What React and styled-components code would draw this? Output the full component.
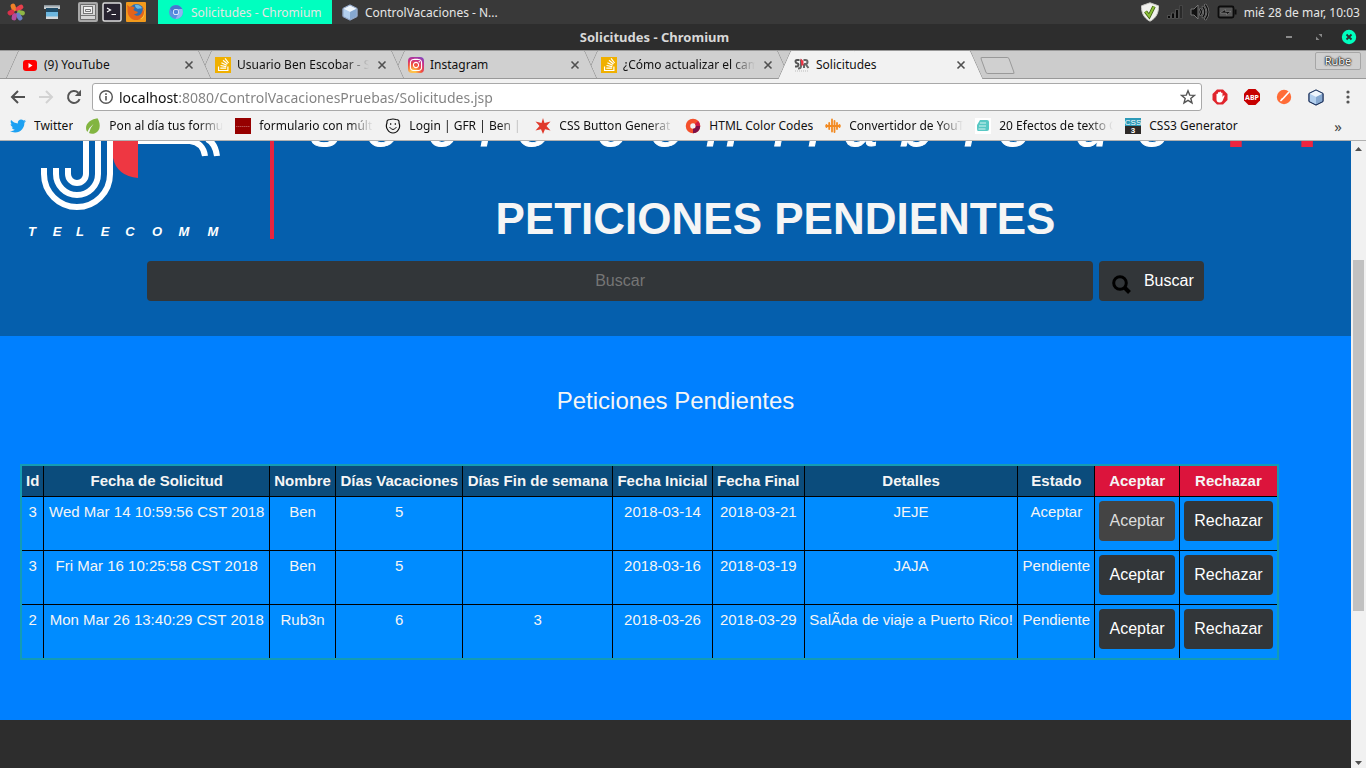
import { useState } from 'react';
import styled, { createGlobalStyle } from 'styled-components';
import { FaTwitter, FaInstagram, FaStackOverflow } from 'react-icons/fa';

const GlobalStyle = createGlobalStyle`
  * {
    box-sizing: border-box;
  }
  body {
    margin: 0;
    font-family: 'Noto Sans', 'Open Sans', sans-serif;
    font-size: 12px;
  }
  button, input {
    font-family: inherit;
    margin: 0;
  }
  svg {
    display: block;
    flex: none;
  }
`;

const Screen = styled.div`
  display: flex;
  flex-direction: column;
  height: 100vh;
  overflow: hidden;
`;

const PlainButton = styled.button`
  display: flex;
  align-items: center;
  justify-content: center;
  padding: 0;
  border: 0;
  background: none;
  color: inherit;
`;

/* desktop panel */

const Panel = styled.header`
  display: flex;
  align-items: center;
  height: 24px;
  background-color: #393939;
  color: #e6e6e6;
`;

const Launchers = styled.div`
  display: flex;
  align-items: center;
  gap: 4px;
  padding: 0 12px 0 6px;
`;

const Launcher = styled(PlainButton)`
  width: 20px;
  height: 20px;
  margin-right: ${(props) => (props.$wide ? '12px' : '0')};
`;

const Task = styled(PlainButton)`
  justify-content: flex-start;
  gap: 7px;
  width: 174px;
  height: 24px;
  padding-left: 10px;
  font-size: 12px;
  background-color: ${(props) => (props.$active ? '#00ffbf' : 'transparent')};
`;

const Tray = styled.div`
  display: flex;
  align-items: center;
  gap: 7px;
  margin-left: auto;
  padding-right: 6px;
`;

/* browser window */

const TitleBar = styled.div`
  display: flex;
  align-items: center;
  height: 26px;
  padding: 0 9px 0 28px;
  background-color: #2d2d2d;
  color: #d8d8d8;
`;

const WindowTitle = styled.div`
  flex: 1;
  font-size: 13px;
  font-weight: bold;
  text-align: center;
`;

const WindowButtons = styled.div`
  display: flex;
  gap: 14px;
`;

const WindowButton = styled(PlainButton)`
  width: 16px;
  height: 16px;
`;

const TabStrip = styled.nav`
  display: flex;
  height: 29px;
  padding: 0 5px 0 12px;
  background-color: #cccccc;
  box-shadow: inset 0 -1px #999999, inset 0 1px #999999;
`;

const Tab = styled.div`
  position: relative;
  z-index: ${(props) => (props.$active ? 10 : 5 - props.$order)};
  display: flex;
  align-items: center;
  gap: 6px;
  flex: 0 1 193px;
  min-width: 0;
  padding: 0 11px 0 10px;

  /* both halves lean outwards to form the trapezoid */
  &::before,
  &::after {
    content: '';
    position: absolute;
    z-index: -1;
    top: 0;
    bottom: ${(props) => (props.$active ? '0' : '1px')};
    width: 60%;
    background-color: ${(props) => (props.$active ? '#f2f2f2' : '#d0d0d0')};
    border-top: 1px solid #999999;
  }
  &::before {
    left: 0;
    border-left: 1px solid #999999;
    border-radius: 2px 0 0 0;
    transform: skewX(-24deg);
  }
  &::after {
    right: 0;
    border-right: 1px solid #999999;
    border-radius: 0 2px 0 0;
    transform: skewX(24deg);
  }
`;

const FadingText = styled.span`
  overflow: hidden;
  white-space: nowrap;
  color: #111111;
  mask-image: ${(props) => (props.$cut ? 'linear-gradient(to left, transparent, black 24px)' : 'none')};
`;

const TabTitle = styled(FadingText)`
  flex: 1;
  margin-right: 2px;
`;

const NewTab = styled.button`
  width: 29px;
  height: 17px;
  margin: 7px 0 0 6px;
  border: 1px solid #999999;
  border-radius: 2px;
  background-color: #d0d0d0;
  transform: skewX(20deg);
`;

const Profile = styled.button`
  width: 46px;
  height: 18px;
  margin: 2px 0 0 auto;
  padding: 0;
  border: 1px solid #a6a6a6;
  border-radius: 2px;
  background-color: #d0d0d0;
  color: white;
  font-size: 11px;
  line-height: 16px;
  text-shadow: 0 0 2px black, 0 0 2px black, 0 0 1px black;
`;

const Toolbar = styled.div`
  display: flex;
  align-items: center;
  height: 36px;
  padding: 0 8px 0 4px;
  background-color: #f2f2f2;
`;

const ToolButton = styled(PlainButton)`
  width: 28px;
  height: 28px;
`;

const ToolBox = styled.div`
  display: flex;
  gap: 12px;
  margin-left: 8px;
`;

const Extension = styled(PlainButton)`
  width: 20px;
  height: 20px;
`;

const AddressBar = styled.label`
  display: flex;
  align-items: center;
  flex: 1;
  height: 28px;
  margin-left: 4px;
  padding: 0 5px;
  gap: 5px;
  border: 1px solid #a9a9a9;
  border-radius: 3px;
  background-color: white;
`;

/* host part is dark, the rest of the address is grey */
const Address = styled.input`
  flex: 1;
  min-width: 0;
  padding: 0;
  border: 0;
  outline: 0;
  font-size: 14px;
  color: #808080;
  background-image: linear-gradient(to right, #111111 60px, #808080 60px);
  background-clip: text;
  -webkit-text-fill-color: transparent;
`;

const Bookmarks = styled.div`
  display: flex;
  align-items: center;
  gap: 12px;
  height: 26px;
  padding: 0 24px 4px 10px;
  background-color: #f2f2f2;
  border-bottom: 1px solid #b0b0b0;
`;

const Bookmark = styled.a`
  display: flex;
  align-items: center;
  gap: 8px;
  text-decoration: none;
`;

const BookmarkTitle = styled(FadingText)`
  width: ${(props) => (props.$cut ? '114px' : 'auto')};
`;

const More = styled(PlainButton)`
  margin-left: auto;
  font-size: 15px;
  line-height: 18px;
  color: #444444;
`;

/* scrolled web page */

const Viewport = styled.div`
  display: flex;
  flex: 1;
  min-height: 0;
`;

const Page = styled.div`
  display: flex;
  flex-direction: column;
  flex: 1;
  min-width: 0;
  overflow: hidden;
  font-family: 'Liberation Sans', Arial, sans-serif;
  color: #f5f5f5;
  background-color: #2d2d2d;
`;

const Banner = styled.div`
  padding-bottom: 35px;
  background-color: #055fad;
`;

const Brand = styled.div`
  display: flex;
  height: 120px;
`;

const Slogan = styled.div`
  flex: 1;
  min-width: 0;
`;

const Title = styled.h1`
  margin: 44px 0 0;
  padding-right: 76px;
  font-size: 44px;
  line-height: 52px;
  text-align: center;
  white-space: nowrap;
`;

const SearchForm = styled.form`
  display: flex;
  justify-content: center;
  gap: 6px;
`;

const SearchInput = styled.input`
  width: 70%;
  height: 40px;
  border: 0;
  border-radius: 4px;
  background-color: #323639;
  color: #f5f5f5;
  font-size: 16px;
  text-align: center;
  &::placeholder {
    color: #757575;
  }
`;

const Button = styled.button`
  height: 40px;
  padding: 0 10px;
  border: 0;
  border-radius: 4px;
  background-color: #323639;
  color: white;
  font-size: 16px;
  &:disabled {
    background-color: #444444;
    color: #dddddd;
  }
`;

const SearchButton = styled(Button)`
  display: flex;
  align-items: center;
  gap: 11px;
`;

const Main = styled.main`
  padding: 51px 0 60px;
  background-color: #0080ff;
`;

const Heading = styled.h2`
  margin: 0 0 49px;
  font-size: 24px;
  font-weight: normal;
  line-height: 28px;
  text-align: center;
`;

const Table = styled.table`
  width: calc(100% - 92px);
  margin-left: 20px;
  border: 2px solid #149cb4;
  border-collapse: collapse;
  font-size: 15px;
  line-height: 22px;
  text-align: center;
  white-space: nowrap;
`;

const HeadCell = styled.th`
  padding: 4px;
  border: 1px solid black;
  background-color: ${(props) => (props.$action ? '#dc143c' : '#0b4c7c')};
`;

const Cell = styled.td`
  padding: ${(props) => (props.$action ? '4px 4px 9px' : '4px')};
  border: 1px solid black;
  background-color: #008cff;
  vertical-align: top;
`;

const RowButton = styled(Button)`
  display: block;
  width: 100%;
`;

const Scrollbar = styled.div`
  display: flex;
  flex-direction: column;
  align-items: center;
  width: 15px;
  padding: 6px 0 3px;
  background-color: #f1f1f1;
`;

const Track = styled.div`
  display: grid;
  grid-template-rows: 109fr 351fr 150fr;
  flex: 1;
  width: 11px;
`;

const Thumb = styled.div`
  grid-row: 2;
  background-color: #c1c1c1;
`;

const Flower = () => (
  <svg width="18" height="18" viewBox="0 0 18 18">
    <g strokeWidth="4.800" strokeLinecap="round">
      <path d="M7 6L6 3" stroke="#f08228" />
      <path d="M11 6l3-2" stroke="#e8404c" />
      <path d="M12.500 9.500l3 .5" stroke="#8fb644" />
      <path d="M11 12l2 3" stroke="#6b7fc6" />
      <path d="M7.500 12.500L7 15" stroke="#b64a9c" />
      <path d="M5 9l-2 1" stroke="#d8304a" />
    </g>
  </svg>
);

const DesktopIcon = () => (
  <svg width="18" height="16" viewBox="0 0 18 16">
    <path d="M1 1h16v4H1z" fill="#c6ccd0" />
    <path d="M1 1h16v1.500H1z" fill="#8c959b" />
    <path d="M3 4h12v10H3z" fill="#6cb6de" />
    <path d="M3 4h12v4H3z" fill="#1e4a66" />
    <path d="M3 12.500h12V15H3z" fill="#d4d8da" />
  </svg>
);

const Drawer = () => (
  <svg width="20" height="20" viewBox="0 0 20 20">
    <rect width="20" height="20" rx="2" fill="#a8a8a8" />
    <rect x="2" y="2" width="16" height="16" rx="1" fill="#6e6e6e" />
    <rect x="3" y="3" width="14" height="14" fill="#d6d6d6" />
    <rect x="5.500" y="4.500" width="9" height="7" fill="#f2f2f2" stroke="#777" />
    <path d="M7.500 9.500h5v-2h-5zM3 13.500h14" fill="none" stroke="#777" />
  </svg>
);

const Terminal = () => (
  <svg width="20" height="20" viewBox="0 0 20 20">
    <rect x="1" y="1" width="18" height="18" rx="1.500" fill="#272330" stroke="#dcdcdc" strokeWidth="1.500" />
    <path d="M5 6l3.500 2L5 10M9.500 12.500H14" fill="none" stroke="#fff" strokeWidth="1.200" />
  </svg>
);

const Firefox = () => (
  <svg width="20" height="20" viewBox="0 0 20 20">
    <rect width="20" height="20" rx="1" fill="#f29a1c" />
    <circle cx="10.500" cy="9.500" r="7.500" fill="#2c6fb4" />
    <path d="M9 3c3-1 6 1 7 3-1 1-3 0-4 1-2-1-3-2-3-4z" fill="#69b7e4" />
    <path d="M1 3l3 2c2-1 4 0 5 1-2 1-2 2 0 3l3 1c-1 2-3 2-4 2 2 3 7 2 8-2 1-2 1-4 0-6 4 4 4 9 0 12-5 4-12 2-14-4-1-3 0-6-1-9z" fill="#e2631b" />
    <path d="M17 6c2 4 1 9-3 11 5 0 6-8 3-11z" fill="#fbd23c" />
  </svg>
);

const Chromium = () => (
  <svg width="16" height="16" viewBox="0 0 16 16">
    <circle cx="8" cy="8" r="7" fill="#5c8fe0" />
    <path d="M2 4.500A7 7 0 0 1 14.200 5H8a3 3 0 0 0-2.800 4z" fill="#4677cf" />
    <path d="M14.200 5A7 7 0 0 1 7.500 15l3-5.500A3 3 0 0 0 10 5z" fill="#8fb5f2" />
    <circle cx="8" cy="8" r="3.100" fill="#e8f2ff" />
    <circle cx="8" cy="8" r="2.300" fill="#4f86dc" />
  </svg>
);

const Cube = ({ edge = '#8fa3c4' }) => (
  <svg width="16" height="17" viewBox="0 0 16 17">
    <path d="M8 1l7 3.500v8L8 16l-7-3.500v-8z" fill="#c6dcf2" stroke={edge} strokeLinejoin="round" />
    <path d="M8 1l7 3.500L8 8 1 4.500z" fill="#eef5fc" />
    <path d="M8 8l6.500-3.200v7.500L8 15.500z" fill="#86a8d0" />
    <path d="M8 8L1.500 4.800v7.500L8 15.500z" fill="#b2cfee" />
    <path d="M8 1l7 3.500v8L8 16l-7-3.500v-8z" fill="none" stroke={edge} strokeLinejoin="round" />
  </svg>
);

const Shield = () => (
  <svg width="20" height="20" viewBox="0 0 20 20">
    <path d="M10 .8l8.500 3c.3 7-2.500 12.500-8.500 15.400C4 16.300 1.200 10.800 1.500 3.800z" fill="#f2f2ee" stroke="#c9c9c4" />
    <path d="M5.500 9.500l3.700 4.700L14 4.500" fill="none" stroke="#3e5c10" strokeWidth="3.600" />
    <path d="M5.500 9.500l3.700 4.700L14 4.500" fill="none" stroke="#8cc03a" strokeWidth="2" />
  </svg>
);

const Signal = () => (
  <svg width="16" height="16" viewBox="0 0 16 16" fill="#0a0a0a" stroke="#5a5a5a" strokeWidth=".8">
    <path d="M.5 11.500h3v3h-3zM4.500 9h3v5.500h-3zM8.500 5.500h3v9h-3z" />
    <path d="M12.500 1.500h3v13h-3z" fill="#2a2a2a" stroke="#4a4a4a" />
  </svg>
);

const Speaker = () => (
  <svg width="20" height="18" viewBox="0 0 20 18" fill="none">
    <path d="M1 6h3l4-4v14l-4-4H1z" fill="#111" stroke="#777" />
    <g stroke="#888" strokeWidth="2.600" strokeLinecap="round">
      <path d="M10.500 6.500q1.800 2.500 0 5M13 4q3.600 5 0 10M15.500 2q5 7 0 14" />
    </g>
    <g stroke="#111" strokeWidth="1.400" strokeLinecap="round">
      <path d="M10.500 6.500q1.800 2.500 0 5M13 4q3.600 5 0 10M15.500 2q5 7 0 14" />
    </g>
  </svg>
);

const Battery = () => (
  <svg width="20" height="16" viewBox="0 0 20 16">
    <rect x="1.500" y="2.500" width="15" height="11" rx="1.500" fill="#555" stroke="#0c0c0c" strokeWidth="1.800" />
    <path d="M18.500 5.500v5" stroke="#0c0c0c" strokeWidth="2" />
    <path d="M3.500 8.500l5-3v2h5.500l-4.500 3.500V9H3.500z" fill="#111" stroke="#999" strokeWidth=".5" />
  </svg>
);

const YouTube = () => (
  <svg width="16" height="16" viewBox="0 0 16 16">
    <rect x="1" y="3" width="14" height="11" rx="3" fill="#ff0000" />
    <path d="M6.500 6v5l4-2.500z" fill="#fff" />
  </svg>
);

const IconTile = styled.span`
  display: flex;
  align-items: center;
  justify-content: center;
  flex: none;
  width: 16px;
  height: 16px;
  color: white;
  border-radius: ${(props) => (props.$round ? '4px' : '0')};
  background: ${(props) => props.$fill};
`;

const StackOverflow = () => (
  <IconTile $fill="#f0b000">
    <FaStackOverflow size={15} />
  </IconTile>
);

const Instagram = () => (
  <IconTile $round $fill="radial-gradient(circle at 30% 100%, #fdc14a 15%, #f2503c 45%, #c8308c 70%, #6a4ccf 100%)">
    <FaInstagram size={14} />
  </IconTile>
);

const CompanyIcon = () => (
  <svg width="16" height="16" viewBox="0 0 16 16" fill="none">
    <path d="M5.500 3H3Q1.500 3 1.500 4.500T3 6.200t1.500 1.600T3 9.500H1" stroke="#555" strokeWidth="2" />
    <path d="M7 2.500V9q0 2.500-3 2.500M9.500 3h2q2 0 2 2t-2 2l3 4M10 7v4" stroke="#666" strokeWidth="2" />
    <path d="M6.500 1.500l3 2.500v4l-2 1z" fill="#ee3344" />
    <path d="M1 14h13" stroke="#bbb" strokeDasharray="1 1" />
  </svg>
);

const Cross = () => (
  <svg width="10" height="10" viewBox="0 0 10 10">
    <path d="M1.500 1.500l7 7m0-7l-7 7" stroke="#505050" strokeWidth="1.600" />
  </svg>
);

const Arrow = ({ color, flip }) => (
  <svg width="16" height="16" viewBox="0 0 16 16" fill="none" stroke={color} strokeWidth="2">
    <path d={flip ? 'M1 8h13M8 2l6 6-6 6' : 'M15 8H2M8 2L2 8l6 6'} />
  </svg>
);

const Reload = () => (
  <svg width="16" height="16" viewBox="0 0 16 16">
    <path d="M13.600 10.200A6 6 0 1 1 12.200 3.700" fill="none" stroke="#555" strokeWidth="2" />
    <path d="M15 .8V7H8.800z" fill="#555" />
  </svg>
);

const Info = () => (
  <svg width="16" height="16" viewBox="0 0 16 16">
    <circle cx="8" cy="8" r="6.300" fill="none" stroke="#555" strokeWidth="1.400" />
    <path d="M8 7v4.500M8 4.300V6" stroke="#555" strokeWidth="1.600" />
  </svg>
);

const Star = () => (
  <svg width="16" height="16" viewBox="0 0 16 16">
    <path d="M8 1.800l1.700 4.300 4.700.3-3.600 3 1.200 4.500L8 11.400l-4 2.500 1.200-4.500-3.600-3 4.700-.3z" fill="none" stroke="#555" strokeWidth="1.400" />
  </svg>
);

const Hand = () => (
  <svg width="16" height="16" viewBox="0 0 16 16">
    <path d="M5 .5h6L15.500 5v6L11 15.500H5L.5 11V5z" fill="#e0242c" />
    <path d="M4.500 8.500V5q1-1 1.500 0V3.500q1-1 1.500 0V3q1-1 1.500 0v1q1-1 1.500 0v4l1-1.500q1.500-.5 1 .8L10.500 12q-1 1.500-3 1.500-3 0-3-3z" fill="#fff" />
  </svg>
);

const Abp = () => (
  <svg width="18" height="18" viewBox="0 0 18 18">
    <path d="M5.500 1h7L17 5.500v7L12.500 17h-7L1 12.500v-7z" fill="#c70000" />
    <text x="9" y="12" textAnchor="middle" fontSize="7" fontWeight="bold" fontFamily="Noto Sans" fill="#fff">ABP</text>
  </svg>
);

const Postman = () => (
  <svg width="16" height="16" viewBox="0 0 16 16">
    <circle cx="8" cy="8" r="7.200" fill="#ff6c37" />
    <path d="M12.500 3.500l-5 5.500M8 8.500l-3 3" stroke="#fff" strokeWidth="1.700" strokeLinecap="round" />
    <path d="M4 12l2-3 1 1z" fill="#fff" />
  </svg>
);

const Dots = () => (
  <svg width="4" height="16" viewBox="0 0 4 16" fill="#555">
    <circle cx="2" cy="3" r="1.600" />
    <circle cx="2" cy="8" r="1.600" />
    <circle cx="2" cy="13" r="1.600" />
  </svg>
);

const Leaf = () => (
  <svg width="16" height="16" viewBox="0 0 16 16">
    <path d="M12.500.3C7 1 1 4.500 1 10q0 2.500 1.300 4Q4.500 9 8.500 6 5 10 4 15q2.500 1.500 6 .3C15.500 13 16 6 12.500.3z" fill="#82b541" />
  </svg>
);

const RedTile = () => (
  <svg width="16" height="16" viewBox="0 0 16 16">
    <path d="M0 0h16v16H0z" fill="#960000" />
    <path d="M1 8.500h14" stroke="#b85050" strokeWidth="1.200" strokeDasharray="1.500 .5" />
  </svg>
);

const Smiley = () => (
  <svg width="16" height="16" viewBox="0 0 16 16" fill="none" stroke="#111">
    <path d="M2 5Q1.500 1.500 5 1.500q3-1 6 0 3.500 0 3 3.500 1.500 3.500-.5 6.500-2 3.500-5.500 3.500T2.500 11.500Q.5 8.500 2 5z" strokeWidth="1.200" />
    <path d="M4.500 9q3.500 5 7 0" />
    <path d="M5 6h1.300M9.700 6H11" strokeWidth="1.500" />
  </svg>
);

const RedStar = () => (
  <svg width="16" height="16" viewBox="0 0 16 16">
    <path d="M8 0l1.500 5L15.500 3.500 11.500 8l4 4.500-5.500-1.300L8 16l-2-4.800L.5 12.500 4.500 8 .5 3.500 6.500 5z" fill="#e03a2c" />
  </svg>
);

const Ring = () => (
  <svg width="16" height="16" viewBox="0 0 16 16" fill="none" strokeWidth="4.500">
    <circle cx="8" cy="8" r="5" stroke="#f4502c" />
    <path d="M13 8a5 5 0 0 1-5 5" stroke="#7c1048" />
    <path d="M11.500 4.500A5 5 0 0 1 13 8" stroke="#d01c44" />
  </svg>
);

const Wave = () => (
  <svg width="16" height="16" viewBox="0 0 16 16" stroke="#f28a22" strokeWidth="1.800" strokeLinecap="round">
    <path d="M1.500 7v2M4.200 5v6M7 1.500v12M9.500 3v11M12 5v6M14.500 7v2M1 8h14" />
  </svg>
);

const TealBox = () => (
  <svg width="16" height="16" viewBox="0 0 16 16">
    <path d="M0 0h16v16H0z" fill="#fff" />
    <path d="M5 2h7q2 0 2 2v7q0 2-2 2H3q-1 0-1-2V7z" fill="#58c8c4" />
    <path d="M5 5h6M4 8h7M3.500 11h7" stroke="#d5f4f2" />
  </svg>
);

const Css3 = () => (
  <svg width="16" height="16" viewBox="0 0 16 16" fontFamily="Liberation Sans" fill="#fff" textAnchor="middle">
    <path d="M0 0h16v8H0z" fill="#2c9ab8" />
    <path d="M0 8h16v8H0z" fill="#2e2a28" />
    <text x="8" y="7" fontSize="8">CSS</text>
    <text x="8" y="15" fontSize="8" fontWeight="bold">3</text>
  </svg>
);

const MagnifierIcon = () => (
  <svg width="24" height="28" viewBox="0 0 24 28" fill="none" stroke="#000">
    <circle cx="11" cy="16" r="6.300" strokeWidth="3" />
    <path d="M15.500 20.500l5 5" strokeWidth="4" />
  </svg>
);

const Logo = () => (
  <svg width="276" height="99" viewBox="0 0 276 99">
    <g fill="none" stroke="#fff" strokeWidth="6">
      <path d="M44 27v6a33 33 0 0 0 66 0V0" />
      <path d="M56 27v6a21 21 0 0 0 42 0V0" />
      <path d="M68 27v6a9 9 0 0 0 18 0V0" />
      <path d="M138 0h52c9 1 14 7 15 15M207-2c6 3 9 9 10 17" />
    </g>
    <path d="M113 0h25v37q-21-2-25-20z" fill="#ee3742" />
    <path d="M270 0h4v98h-4z" fill="#e8243f" />
    <text
      x="32 57 80 105 130 157 184 213"
      y="95"
      textAnchor="middle"
      fontSize="13"
      fontWeight="bold"
      fontStyle="italic"
      fill="#fff"
    >
      TELECOMM
    </text>
  </svg>
);

// only the feet of the slogan are left in view at this scroll position
const SloganArt = () => (
  <svg width="100%" height="8" viewBox="0 0 1075 8" preserveAspectRatio="xMinYMin meet" textAnchor="middle">
    <g fontSize="60" fontStyle="italic" fill="#fff" stroke="#fff">
      <text x="50 107 167 211 258" y="5">socio</text>
      <text x="336 391 447 505 539 585 641 695 739" y="5">confiable</text>
      <text x="816 878" y="5">de</text>
    </g>
    <text x="960 1031" y="6" fontSize="80" fontWeight="bold" fill="#ee2440">TI</text>
  </svg>
);

const tabs = [
  { title: '(9) YouTube', icon: <YouTube /> },
  { title: 'Usuario Ben Escobar - S', icon: <StackOverflow />, cut: true },
  { title: 'Instagram', icon: <Instagram /> },
  { title: '¿Cómo actualizar el cam', icon: <StackOverflow />, cut: true },
  { title: 'Solicitudes', icon: <CompanyIcon />, active: true },
];

const bookmarks = [
  { title: 'Twitter', icon: <FaTwitter size={16} color="#1da1f2" /> },
  { title: 'Pon al día tus formu', icon: <Leaf />, cut: true },
  { title: 'formulario con múlti', icon: <RedTile />, cut: true },
  { title: 'Login | GFR | Ben |', icon: <Smiley />, cut: true },
  { title: 'CSS Button Generat', icon: <RedStar />, cut: true },
  { title: 'HTML Color Codes', icon: <Ring /> },
  { title: 'Convertidor de YouT', icon: <Wave />, cut: true },
  { title: '20 Efectos de texto C', icon: <TealBox />, cut: true },
  { title: 'CSS3 Generator', icon: <Css3 /> },
];

const columns = [
  'Id',
  'Fecha de Solicitud',
  'Nombre',
  'Días Vacaciones',
  'Días Fin de semana',
  'Fecha Inicial',
  'Fecha Final',
  'Detalles',
  'Estado',
];

const requests = [
  ['3', 'Wed Mar 14 10:59:56 CST 2018', 'Ben', '5', '', '2018-03-14', '2018-03-21', 'JEJE', 'Aceptar'],
  ['3', 'Fri Mar 16 10:25:58 CST 2018', 'Ben', '5', '', '2018-03-16', '2018-03-19', 'JAJA', 'Pendiente'],
  ['2', 'Mon Mar 26 13:40:29 CST 2018', 'Rub3n', '6', '3', '2018-03-26', '2018-03-29', 'SalÃda de viaje a Puerto Rico!', 'Pendiente'],
];

const DesktopPanel = () => (
  <Panel>
    <Launchers>
      <Launcher $wide aria-label="Menú"><Flower /></Launcher>
      <Launcher $wide aria-label="Escritorio"><DesktopIcon /></Launcher>
      <Launcher aria-label="Archivos"><Drawer /></Launcher>
      <Launcher aria-label="Terminal"><Terminal /></Launcher>
      <Launcher aria-label="Firefox"><Firefox /></Launcher>
    </Launchers>
    <Task $active><Chromium />Solicitudes - Chromium</Task>
    <Task><Cube />ControlVacaciones - N...</Task>
    <Tray>
      <Shield />
      <Signal />
      <Speaker />
      <Battery />
      <span>mié 28 de mar, 10:03</span>
    </Tray>
  </Panel>
);

const WindowBar = () => (
  <TitleBar>
    <WindowTitle>Solicitudes - Chromium</WindowTitle>
    <WindowButtons>
      <WindowButton aria-label="Minimizar">
        <svg width="16" height="16"><path d="M5 8h6" stroke="#aaa" strokeWidth="1.500" /></svg>
      </WindowButton>
      <WindowButton aria-label="Restaurar">
        <svg width="16" height="16" fill="#888"><path d="M7.500 5H11v3.500zM5 7.500V11h3.500z" /></svg>
      </WindowButton>
      <WindowButton aria-label="Cerrar">
        <svg width="16" height="16">
          <circle cx="8" cy="8" r="7.200" fill="#00ffbf" />
          <path d="M5.500 5.500l5 5m0-5l-5 5" stroke="#2d2d2d" strokeWidth="1.800" />
        </svg>
      </WindowButton>
    </WindowButtons>
  </TitleBar>
);

const BrowserTabs = () => (
  <TabStrip>
    {tabs.map((tab, i) => (
      <Tab key={tab.title} $active={tab.active} $order={i}>
        {tab.icon}
        <TabTitle $cut={tab.cut}>{tab.title}</TabTitle>
        <PlainButton aria-label="Cerrar pestaña"><Cross /></PlainButton>
      </Tab>
    ))}
    <NewTab aria-label="Nueva pestaña" />
    <Profile>Rube</Profile>
  </TabStrip>
);

const BrowserToolbar = () => (
  <Toolbar>
    <ToolButton aria-label="Atrás"><Arrow color="#505050" /></ToolButton>
    <ToolButton aria-label="Adelante"><Arrow flip color="#d2d2d2" /></ToolButton>
    <ToolButton aria-label="Recargar"><Reload /></ToolButton>
    <AddressBar>
      <Info />
      <Address aria-label="Dirección" defaultValue="localhost:8080/ControlVacacionesPruebas/Solicitudes.jsp" />
      <Star />
    </AddressBar>
    <ToolBox>
      <Extension aria-label="Bloqueador"><Hand /></Extension>
      <Extension aria-label="Adblock Plus"><Abp /></Extension>
      <Extension aria-label="Postman"><Postman /></Extension>
      <Extension aria-label="NetBeans"><Cube edge="#1e3560" /></Extension>
      <Extension aria-label="Más opciones"><Dots /></Extension>
    </ToolBox>
  </Toolbar>
);

const RequestTable = () => (
  <Table>
    <thead>
      <tr>
        {columns.map((name) => (
          <HeadCell key={name}>{name}</HeadCell>
        ))}
        <HeadCell $action>Aceptar</HeadCell>
        <HeadCell $action>Rechazar</HeadCell>
      </tr>
    </thead>
    <tbody>
      {requests.map((request) => (
        <tr key={request[1]}>
          {request.map((value, i) => (
            <Cell key={columns[i]}>{value}</Cell>
          ))}
          <Cell $action>
            <RowButton disabled={request[8] === 'Aceptar'}>Aceptar</RowButton>
          </Cell>
          <Cell $action>
            <RowButton>Rechazar</RowButton>
          </Cell>
        </tr>
      ))}
    </tbody>
  </Table>
);

const App = () => {
  const [search, setSearch] = useState('');

  return (
    <Screen>
      <GlobalStyle />
      <DesktopPanel />
      <WindowBar />
      <BrowserTabs />
      <BrowserToolbar />
      <Bookmarks>
        {bookmarks.map((bookmark) => (
          <Bookmark key={bookmark.title} href="#">
            {bookmark.icon}
            <BookmarkTitle $cut={bookmark.cut}>{bookmark.title}</BookmarkTitle>
          </Bookmark>
        ))}
        <More aria-label="Más marcadores">»</More>
      </Bookmarks>
      <Viewport>
        <Page>
          <Banner>
            <Brand>
              <Logo />
              <Slogan>
                <SloganArt />
                <Title>PETICIONES PENDIENTES</Title>
              </Slogan>
            </Brand>
            <SearchForm onSubmit={(event) => event.preventDefault()}>
              <SearchInput
                aria-label="Buscar"
                placeholder="Buscar"
                value={search}
                onChange={({ target }) => setSearch(target.value)}
              />
              <SearchButton type="submit"><MagnifierIcon />Buscar</SearchButton>
            </SearchForm>
          </Banner>
          <Main>
            <Heading>Peticiones Pendientes</Heading>
            <RequestTable />
          </Main>
        </Page>
        <Scrollbar>
          <svg width="7" height="4"><path d="M0 4l3.500-4L7 4z" fill="#505050" /></svg>
          <Track><Thumb /></Track>
          <svg width="7" height="4"><path d="M0 0l3.500 4L7 0z" fill="#505050" /></svg>
        </Scrollbar>
      </Viewport>
    </Screen>
  );
};

export default App;
